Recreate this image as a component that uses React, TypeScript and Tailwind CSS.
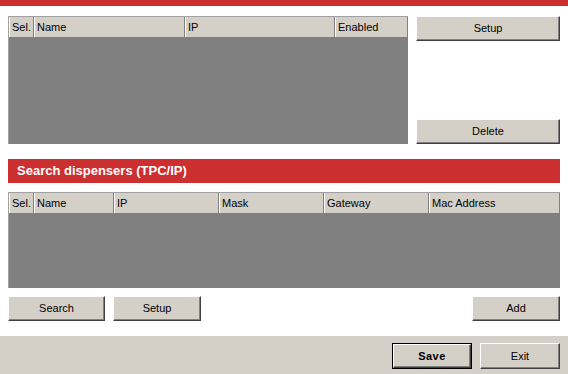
import type { ReactNode } from "react";

const FONT = { fontFamily: '"Liberation Sans", Arial, sans-serif' };

function Btn({ children, className = "", bold = false, isDefault = false }: { children: ReactNode; className?: string; bold?: boolean; isDefault?: boolean }) {
  const inner = (
    <div
      className={`flex h-full w-full items-center justify-center border border-white border-r-[#404040] border-b-[#404040] bg-[#d4d0c8] text-[11px] text-black shadow-[inset_-1px_-1px_0_#808080] ${
        bold ? "font-bold tracking-[0.5px]" : ""
      }`}
    >
      {children}
    </div>
  );
  if (isDefault) {
    return <div className={`border border-black ${className}`}>{inner}</div>;
  }
  return <div className={className}>{inner}</div>;
}

function Grid({ cols, className = "" }: { cols: [string, number][]; className?: string }) {
  return (
    <div className={`flex flex-col border-t border-l border-[#a0a0a0] bg-[#808080] ${className}`}>
      <div className="flex h-[20px] bg-[#d4d0c8]">
        {cols.map(([label, w]) => (
          <div
            key={label}
            style={{ width: w }}
            className="flex shrink-0 items-center border-l border-white border-r border-r-[#808080] px-[2px] text-[11px] text-black"
          >
            {label}
          </div>
        ))}
      </div>
      <div className="flex-1" />
    </div>
  );
}

export default function App() {
  return (
    <div className="h-[374px] w-[568px] overflow-hidden bg-white" style={FONT}>
      <div className="h-[6px] bg-[#cc2f2f]" />

      <div className="px-2">
        <div className="mt-[10px] flex gap-2">
          <Grid
            className="h-[128px] w-[400px]"
            cols={[
              ["Sel.", 25],
              ["Name", 151],
              ["IP", 150],
              ["Enabled", 73],
            ]}
          />
          <div className="flex h-[128px] w-[144px] flex-col justify-between">
            <Btn className="h-[25px]">Setup</Btn>
            <Btn className="h-[25px]">Delete</Btn>
          </div>
        </div>

        <div className="mt-[15px] flex h-[24px] items-center bg-[#cc2f2f] pl-[9px] text-[13px] font-bold text-white">
          Search dispensers (TPC/IP)
        </div>

        <Grid
          className="mt-[9px] h-[96px] w-[552px]"
          cols={[
            ["Sel.", 25],
            ["Name", 80],
            ["IP", 105],
            ["Mask", 105],
            ["Gateway", 105],
            ["Mac Address", 131],
          ]}
        />

        <div className="mt-[8px] flex h-[25px] items-stretch">
          <Btn className="w-[97px]">Search</Btn>
          <Btn className="ml-[8px] w-[88px]">Setup</Btn>
          <div className="flex-1" />
          <Btn className="w-[88px]">Add</Btn>
        </div>
      </div>

      <div className="mt-[15px] flex h-[38px] items-start justify-end gap-2 bg-[#d4d0c8] pr-2 pt-[7px]">
        <Btn isDefault bold className="h-[26px] w-[80px]">
          Save
        </Btn>
        <Btn className="h-[26px] w-[80px]">Exit</Btn>
      </div>
    </div>
  );
}
